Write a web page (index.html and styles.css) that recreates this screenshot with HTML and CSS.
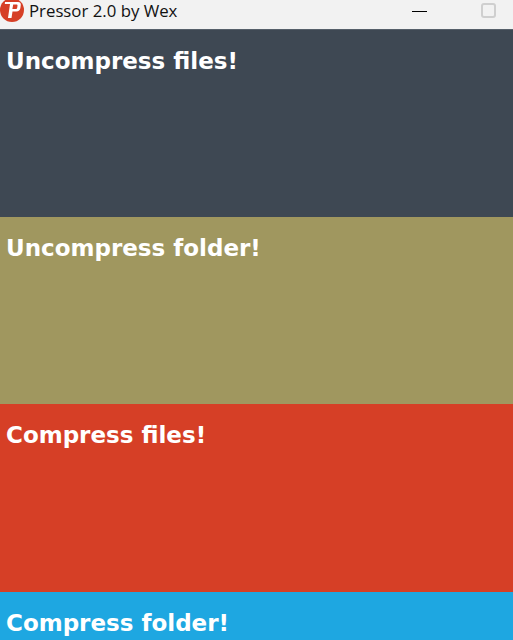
FILE: index.html
```html
<!DOCTYPE html>
<html lang="en">

<head>
  <meta charset="UTF-8">
  <meta name="viewport" content="width=device-width, initial-scale=1.0">
  <title>Pressor 2.0 by Wex</title>
  <link rel="stylesheet" href="styles.css">
</head>

<body>
  <div class="titlebar">
    <svg class="app-icon" viewBox="0 0 24 24" aria-hidden="true">
      <circle cx="12" cy="11" r="12" fill="#d63f26" />
      <path fill-rule="evenodd" d="M5 3h13c2 0 3 1 2.800 3l-.4 3c-.3 2.300-1.800 3.500-4 3.500h-3.900l-1 6.500H8l2-14H4.800zM13.200 5.500l-.8 4.500h3.300c.8 0 1.400-.4 1.500-1.200l.3-2c.1-.9-.3-1.300-1.100-1.300z" fill="#fff" />
    </svg>
    <span class="app-title">Pressor 2.0 by Wex</span>
    <span class="win-min"></span>
    <span class="win-max"></span>
  </div>

  <div class="panel panel-slate">Uncompress files!</div>
  <div class="panel panel-olive">Uncompress folder!</div>
  <div class="panel panel-red">Compress files!</div>
  <div class="panel panel-blue">Compress folder!</div>
</body>

</html>
```

FILE: styles.css
```css
html,
body {
  height: 100%;
}

body {
  display: flex;
  flex-direction: column;
  margin: 0;
  overflow: hidden;
  background: #f2f2f2;
}

.titlebar {
  display: flex;
  align-items: center;
  flex: none;
  height: 21px;
  padding-bottom: 8px;
  background: #f2f2f2;
}

.app-icon {
  width: 24px;
  height: 24px;
  flex: none;
}

.app-title {
  margin-left: 5px;
  font-family: "Open Sans", "Noto Sans", sans-serif;
  font-size: 16.800px;
  color: #111;
}

.win-min {
  width: 15px;
  height: 1px;
  margin-top: 1px;
  margin-left: auto;
  background: #000;
}

.win-max {
  box-sizing: border-box;
  width: 15px;
  height: 15px;
  margin-left: 54px;
  margin-right: 17px;
  border: 2px solid #cfcfcf;
  border-radius: 3px;
}

.panel {
  box-sizing: border-box;
  flex: none;
  height: 187.500px;
  padding: 16px 0 0 6px;
  font-family: "DejaVu Sans", sans-serif;
  font-size: 23px;
  font-weight: bold;
  line-height: 30px;
  color: #fff;
}

.panel-slate {
  background: #3e4853;
  border-top: 1px solid #56606a;
}

.panel-olive {
  background: #a0975f;
}

.panel-red {
  background: #d63f26;
}

.panel-blue {
  flex: 1;
  height: auto;
  background: #1ea7e1;
}
```
